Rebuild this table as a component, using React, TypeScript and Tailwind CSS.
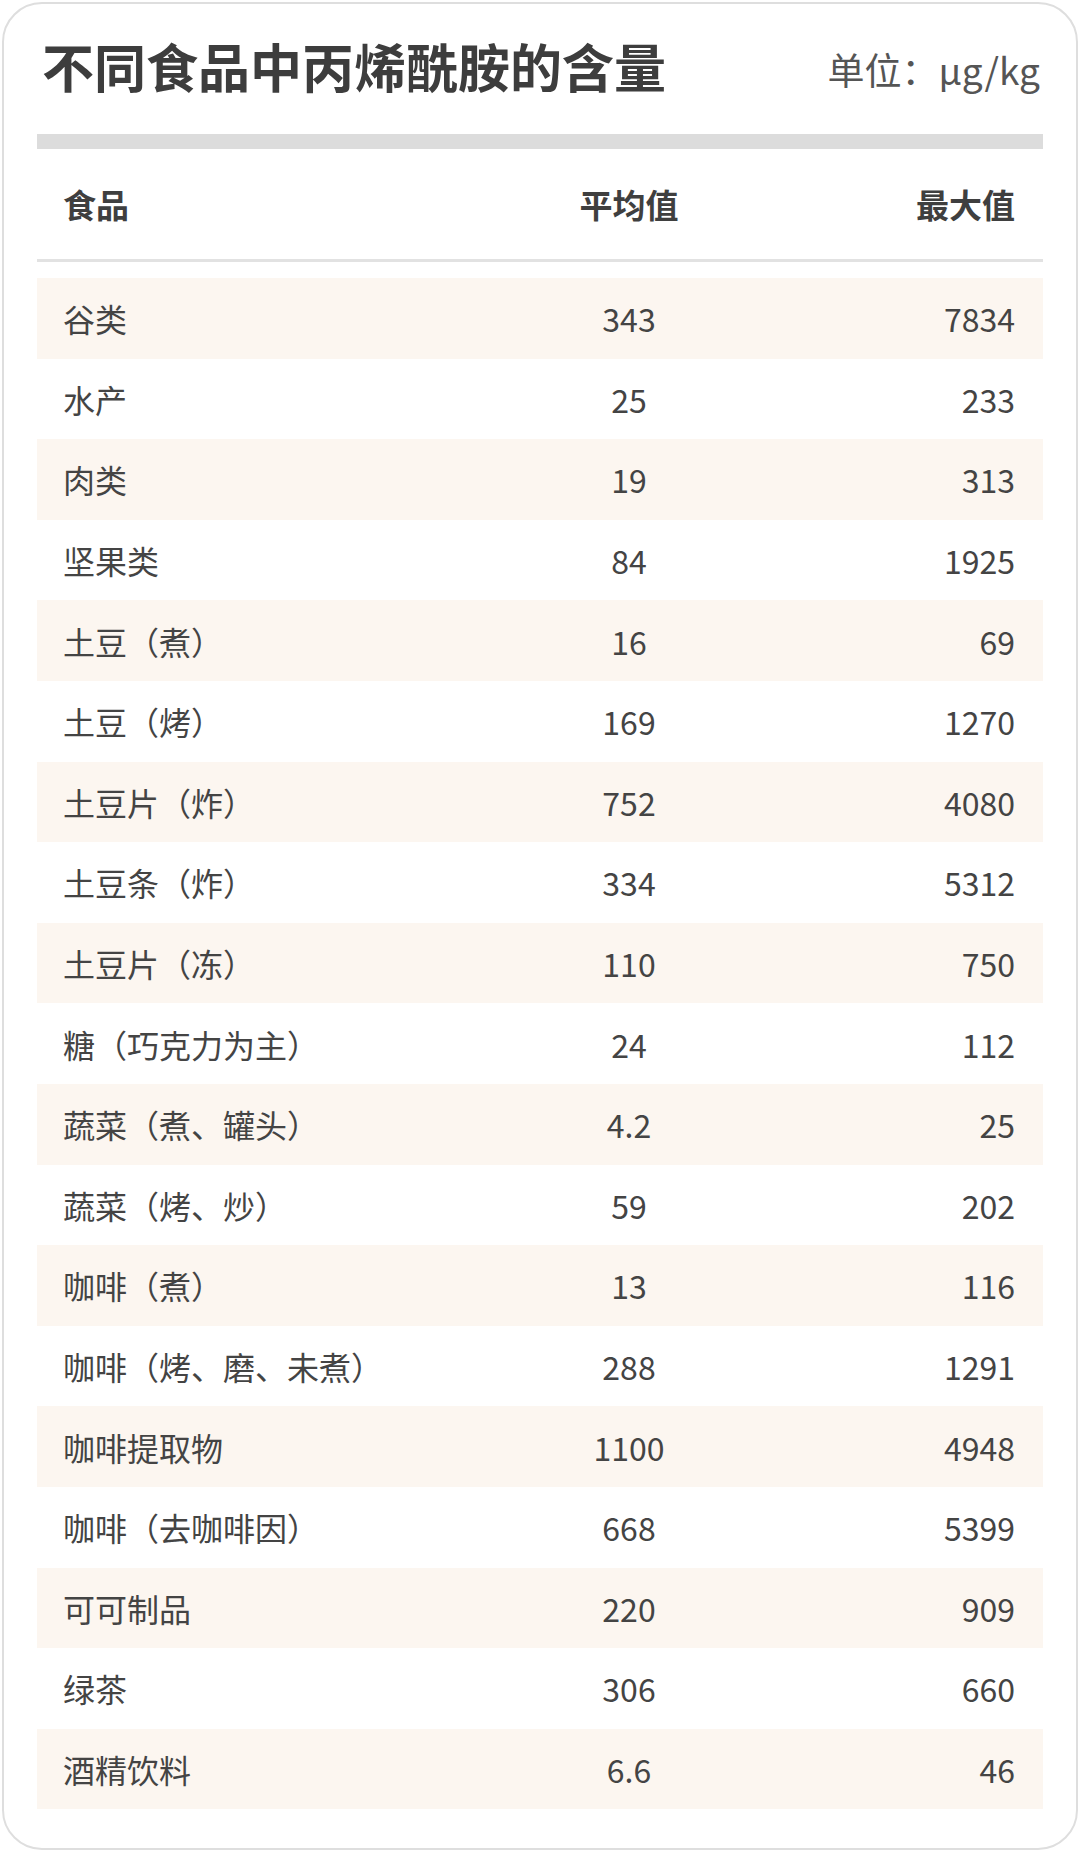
import React from "react";

const rows: [string, string, string][] = [
  ["谷类", "343", "7834"],
  ["水产", "25", "233"],
  ["肉类", "19", "313"],
  ["坚果类", "84", "1925"],
  ["土豆（煮）", "16", "69"],
  ["土豆（烤）", "169", "1270"],
  ["土豆片（炸）", "752", "4080"],
  ["土豆条（炸）", "334", "5312"],
  ["土豆片（冻）", "110", "750"],
  ["糖（巧克力为主）", "24", "112"],
  ["蔬菜（煮、罐头）", "4.2", "25"],
  ["蔬菜（烤、炒）", "59", "202"],
  ["咖啡（煮）", "13", "116"],
  ["咖啡（烤、磨、未煮）", "288", "1291"],
  ["咖啡提取物", "1100", "4948"],
  ["咖啡（去咖啡因）", "668", "5399"],
  ["可可制品", "220", "909"],
  ["绿茶", "306", "660"],
  ["酒精饮料", "6.6", "46"],
];

export default function App() {
  return (
    <div
      className="w-[1080px] h-[1852px] bg-white p-[2px]"
      style={{ fontFamily: '"Noto Sans CJK SC", "Noto Sans", sans-serif' }}
    >
      <div className="h-full rounded-[40px] border-2 border-[#dedede] bg-white px-[33px] pt-[30px]">
        <div className="flex items-center justify-between pl-[5px] pr-[0px] h-[64px]">
          <div className="text-[52px] font-bold text-[#3d3d3d] leading-none">
            不同食品中丙烯酰胺的含量
          </div>
          <div className="text-[37px] text-[#555] leading-none mt-[6px] mr-[3px]">单位：μg/kg</div>
        </div>
        <div className="mt-[36px] h-[15px] bg-[#dcdcdc]" />
        <div className="flex items-center h-[110px] pl-[26px] pr-[28px] text-[33px] font-bold text-[#3f3f3f] leading-none">
          <div className="w-[416px]">食品</div>
          <div className="w-[300px] text-center">平均值</div>
          <div className="flex-1 text-right">最大值</div>
        </div>
        <div className="h-[3px] bg-[#e2e2e2]" />
        <div className="mt-[16px]">
          {rows.map((r, i) => (
            <div
              key={i}
              className={
                "flex items-center h-[80.6px] pl-[26px] pr-[28px] text-[32px] text-[#444] leading-none " +
                (i % 2 === 0 ? "bg-[#fcf6f0]" : "bg-white")
              }
            >
              <div className="w-[416px]">{r[0]}</div>
              <div className="w-[300px] text-center">{r[1]}</div>
              <div className="flex-1 text-right">{r[2]}</div>
            </div>
          ))}
        </div>
      </div>
    </div>
  );
}
